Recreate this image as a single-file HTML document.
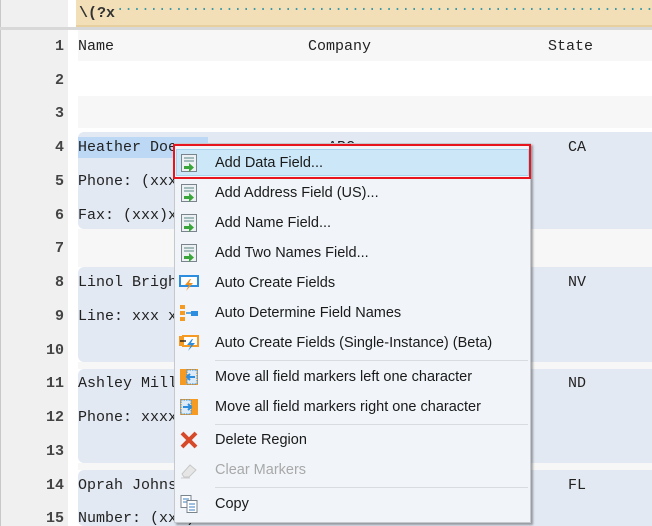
<!DOCTYPE html>
<html><head><meta charset="utf-8"><style>
*{margin:0;padding:0;box-sizing:border-box}
html,body{width:652px;height:526px;overflow:hidden}
body{background:#fff;position:relative;font-family:"Liberation Mono",monospace;font-size:15px;color:#222}
.abs{position:absolute}
.gut{left:0;top:0;width:68px;height:526px;background:#f0f0f0;border-left:1px solid #c8c8c8}
.top{left:76px;top:0;width:576px;height:27px;background:#f2dfb8;border-bottom:2px solid #e8cfa0}
.topline{left:0;top:27px;width:652px;height:3px;background:#d8d8d8}
.band{left:78px;width:574px;background:#f7f7f7}
.reg{left:78px;width:574px;background:#e3e9f3;border-radius:6px 0 0 6px}
.ln{left:0;width:64px;text-align:right;font-weight:bold;color:#444}
.t{white-space:pre}
.menu{left:174px;top:143px;width:357px;height:380px;background:#f1f5f9;border:1px solid #c5c9cd;box-shadow:2px 2px 2px rgba(0,0,0,.35)}
.it{position:absolute;left:40px;font-family:"Liberation Sans",sans-serif;font-size:14.5px;color:#1a1a1a;white-space:nowrap}
.sep{position:absolute;left:40px;right:2px;height:1px;background:#d9dcdf}
.ic{position:absolute;left:4px;width:20px;height:20px}
</style></head><body>
<div class="abs gut"></div>
<div class="abs top"></div>
<div class="abs t" style="left:79px;top:5px;font-weight:bold;color:#333">\(?x</div>
<div class="abs t" style="left:116px;top:2px;color:#3a9aa8;font-size:14px;width:536px;overflow:hidden">·······································································</div>
<div class="abs topline"></div>
<div class="abs" style="left:68px;top:30px;width:10px;height:496px;background:#fff"></div>
<div class="abs band" style="top:30px;height:31px"></div>
<div class="abs band" style="top:96px;height:32px"></div>
<div class="abs band" style="top:229px;height:38px"></div>
<div class="abs band" style="top:362px;height:7px"></div>
<div class="abs band" style="top:463px;height:7px"></div>
<div class="abs reg" style="top:132px;height:97px"></div>
<div class="abs reg" style="top:267px;height:95px"></div>
<div class="abs reg" style="top:369px;height:94px"></div>
<div class="abs reg" style="top:470px;height:56px"></div>
<div class="abs" style="left:78px;top:137px;width:130px;height:21px;background:#bcd8f5"></div>

<div class="abs ln" style="top:38px">1</div>
<div class="abs ln" style="top:72px">2</div>
<div class="abs ln" style="top:105px">3</div>
<div class="abs ln" style="top:139px">4</div>
<div class="abs ln" style="top:173px">5</div>
<div class="abs ln" style="top:207px">6</div>
<div class="abs ln" style="top:240px">7</div>
<div class="abs ln" style="top:274px">8</div>
<div class="abs ln" style="top:308px">9</div>
<div class="abs ln" style="top:342px">10</div>
<div class="abs ln" style="top:375px">11</div>
<div class="abs ln" style="top:409px">12</div>
<div class="abs ln" style="top:443px">13</div>
<div class="abs ln" style="top:477px">14</div>
<div class="abs ln" style="top:510px">15</div>

<div class="abs t" style="left:78px;top:38px">Name</div>
<div class="abs t" style="left:308px;top:38px">Company</div>
<div class="abs t" style="left:548px;top:38px">State</div>
<div class="abs t" style="left:78px;top:139px">Heather Doe</div>
<div class="abs t" style="left:328px;top:139px">ABC</div>
<div class="abs t" style="left:568px;top:139px">CA</div>
<div class="abs t" style="left:78px;top:173px">Phone: (xxx)xxxxxxx</div>
<div class="abs t" style="left:78px;top:207px">Fax: (xxx)xxxxxxx</div>
<div class="abs t" style="left:78px;top:274px">Linol Brighton</div>
<div class="abs t" style="left:568px;top:274px">NV</div>
<div class="abs t" style="left:78px;top:308px">Line: xxx xxxxxxx</div>
<div class="abs t" style="left:78px;top:375px">Ashley Miller</div>
<div class="abs t" style="left:568px;top:375px">ND</div>
<div class="abs t" style="left:78px;top:409px">Phone: xxxxxxxxxx</div>
<div class="abs t" style="left:78px;top:477px">Oprah Johnson</div>
<div class="abs t" style="left:568px;top:477px">FL</div>
<div class="abs t" style="left:78px;top:510px">Number: (xxx)xxxxxxx</div>

<div class="abs menu">
 <div style="position:absolute;left:1px;top:5px;width:353px;height:27px;background:#cce8f8;border:1px solid #a9d4ee"></div>
 <svg class="ic" style="top:9px" viewBox="0 0 20 20"><rect x="2.5" y="1.5" width="15" height="17" fill="#eef1f3" stroke="#7a848c"/><path d="M5 5h10M5 8h10" stroke="#8aa" stroke-width="1.4"/><path d="M5 13h5v-3l5 4.5-5 4.5v-3H5z" fill="#3aa53a"/></svg>
 <div class="it" style="top:11px">Add Data Field...</div>
 <svg class="ic" style="top:39px" viewBox="0 0 20 20"><rect x="2.5" y="1.5" width="15" height="17" fill="#eef1f3" stroke="#7a848c"/><path d="M5 5h10M5 8h10" stroke="#8aa" stroke-width="1.4"/><path d="M5 13h5v-3l5 4.5-5 4.5v-3H5z" fill="#3aa53a"/></svg>
 <div class="it" style="top:41px">Add Address Field (US)...</div>
 <svg class="ic" style="top:69px" viewBox="0 0 20 20"><rect x="2.5" y="1.5" width="15" height="17" fill="#eef1f3" stroke="#7a848c"/><path d="M5 5h10M5 8h10" stroke="#8aa" stroke-width="1.4"/><path d="M5 13h5v-3l5 4.5-5 4.5v-3H5z" fill="#3aa53a"/></svg>
 <div class="it" style="top:71px">Add Name Field...</div>
 <svg class="ic" style="top:99px" viewBox="0 0 20 20"><rect x="2.5" y="1.5" width="15" height="17" fill="#eef1f3" stroke="#7a848c"/><path d="M5 5h10M5 8h10" stroke="#8aa" stroke-width="1.4"/><path d="M5 13h5v-3l5 4.5-5 4.5v-3H5z" fill="#3aa53a"/></svg>
 <div class="it" style="top:101px">Add Two Names Field...</div>
 <svg class="ic" style="top:129px" viewBox="0 0 20 20"><rect x="1" y="3" width="18" height="10" fill="#fff" stroke="#2d8ee0" stroke-width="2"/><path d="M11 6l-5 6h4l-3 6 7-8h-4l2-4z" fill="#f0901e"/></svg>
 <div class="it" style="top:131px">Auto Create Fields</div>
 <svg class="ic" style="top:159px" viewBox="0 0 20 20"><rect x="1" y="2" width="5" height="4" fill="#f59a23"/><rect x="1" y="8" width="5" height="4" fill="#f59a23"/><rect x="1" y="14" width="5" height="4" fill="#f59a23"/><path d="M7 10h5" stroke="#2d8ee0" stroke-width="1.5"/><rect x="12" y="8" width="7" height="5" fill="#2d8ee0"/></svg>
 <div class="it" style="top:161px">Auto Determine Field Names</div>
 <svg class="ic" style="top:189px" viewBox="0 0 20 20"><rect x="4" y="3" width="15" height="10" fill="#fff" stroke="#f59a23" stroke-width="2"/><rect x="0" y="3" width="3" height="10" fill="#f59a23"/><path d="M1 8h6" stroke="#222" stroke-width="1.4"/><path d="M13 6l-5 6h4l-3 6 7-8h-4l2-4z" fill="#2d8ee0"/></svg>
 <div class="it" style="top:191px">Auto Create Fields (Single-Instance) (Beta)</div>
 <div class="sep" style="top:216px"></div>
 <svg class="ic" style="top:223px" viewBox="0 0 20 20"><rect x="1" y="2" width="18" height="16" fill="#f59a23"/><rect x="8" y="3" width="10" height="14" fill="#dcebf7" stroke="#2d8ee0" stroke-dasharray="1.5 1"/><path d="M16 10H8m3-3l-3 3 3 3" stroke="#2d8ee0" stroke-width="2" fill="none"/></svg>
 <div class="it" style="top:225px">Move all field markers left one character</div>
 <svg class="ic" style="top:253px" viewBox="0 0 20 20"><rect x="1" y="2" width="18" height="16" fill="#f59a23"/><rect x="2" y="3" width="10" height="14" fill="#dcebf7" stroke="#2d8ee0" stroke-dasharray="1.5 1"/><path d="M4 10h8m-3-3l3 3-3 3" stroke="#2d8ee0" stroke-width="2" fill="none"/></svg>
 <div class="it" style="top:255px">Move all field markers right one character</div>
 <div class="sep" style="top:280px"></div>
 <svg class="ic" style="top:286px" viewBox="0 0 20 20"><path d="M3 3l14 14M17 3L3 17" stroke="#d64a2a" stroke-width="4"/></svg>
 <div class="it" style="top:288px">Delete Region</div>
 <svg class="ic" style="top:316px" viewBox="0 0 20 20"><path d="M3 14l8-9 6 5-7 7H5z" fill="#e6e6e6" stroke="#c8c8c8"/><path d="M2 18h9" stroke="#ccc"/></svg>
 <div class="it" style="top:318px;color:#a8a8a8">Clear Markers</div>
 <div class="sep" style="top:343px"></div>
 <svg class="ic" style="top:350px" viewBox="0 0 20 20"><rect x="2" y="1.5" width="10" height="12" fill="#fff" stroke="#7a848c"/><path d="M4 5h6M4 8h6" stroke="#3a7fc4"/><rect x="8" y="6.5" width="10" height="12" fill="#fff" stroke="#7a848c"/><path d="M10 10h6M10 13h6M10 16h6" stroke="#3a7fc4"/></svg>
 <div class="it" style="top:352px">Copy</div>
</div>
<div class="abs" style="left:173px;top:144px;width:358px;height:35px;border:2px solid #e8141e"></div>
</body></html>
